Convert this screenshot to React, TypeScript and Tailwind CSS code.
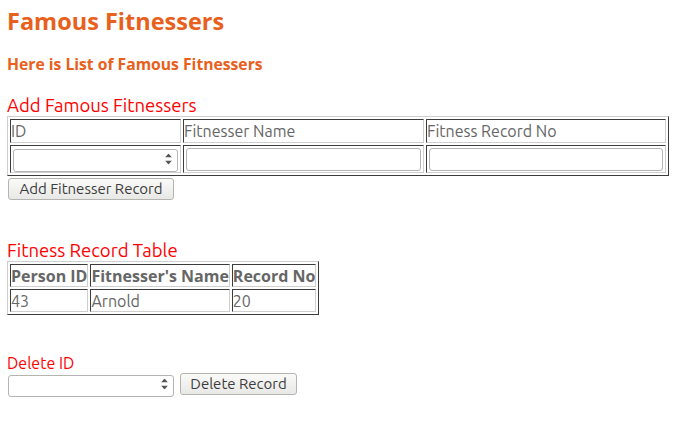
const body = "font-['Ubuntu','Noto_Sans','DejaVu_Sans',sans-serif]";

function Spinner() {
  return (
    <span className="pointer-events-none absolute right-[6px] top-1/2 flex -translate-y-1/2 flex-col items-center gap-[3px]">
      <svg width="7" height="4" viewBox="0 0 7 4">
        <path d="M0 4 L3.5 0 L7 4 Z" fill="#555" />
      </svg>
      <svg width="7" height="4" viewBox="0 0 7 4">
        <path d="M0 0 L3.5 4 L7 0 Z" fill="#555" />
      </svg>
    </span>
  );
}

function NumberBox({ className }: { className: string }) {
  return (
    <div className={`relative ${className}`}>
      <input
        type="text"
        className="h-full w-full rounded-[3px] border border-[#b4b4b0] bg-white px-1 text-[14px] outline-none"
      />
      <Spinner />
    </div>
  );
}

const cell = "border border-t-[#3c3c3c] border-l-[#3c3c3c] border-b-[#cfcfcf] border-r-[#cfcfcf] p-0";
const head = `${cell} whitespace-nowrap text-left font-['Open_Sans',sans-serif] text-[16px] font-bold`;

export default function App() {
  return (
    <div className={`min-h-[437px] bg-white px-[7px] pt-[7px] text-[#666666] ${body}`}>
      <h1 className="font-['Open_Sans',sans-serif] text-[23.5px] font-bold leading-[28px] text-[#e8601c]">
        Famous Fitnessers
      </h1>
      <h3 className="mt-[19px] font-['Open_Sans',sans-serif] text-[15.7px] font-bold leading-[21px] text-[#e8601c]">
        Here is List of Famous Fitnessers
      </h3>

      <h4 className="mt-[19px] text-[18.5px] leading-[22px] text-[#ff0000]">Add Famous Fitnessers</h4>
      <table className="border-separate border-spacing-[2px] border border-t-[#cfcfcf] border-l-[#cfcfcf] border-b-[#3c3c3c] border-r-[#3c3c3c]">
        <tbody>
          <tr className="h-[24px] text-[16px] leading-[20px]">
            <td className={`${cell} w-[171px]`}>ID</td>
            <td className={`${cell} w-[241px]`}>Fitnesser Name</td>
            <td className={`${cell} w-[240px]`}>Fitness Record No</td>
          </tr>
          <tr className="h-[28px]">
            <td className={`${cell} px-[2px]`}>
              <NumberBox className="h-[23px] w-full" />
            </td>
            <td className={`${cell} px-[2px]`}>
              <input
                type="text"
                className="h-[23px] w-full rounded-[3px] border border-[#b4b4b0] bg-white px-1 text-[14px] outline-none"
              />
            </td>
            <td className={`${cell} px-[2px]`}>
              <input
                type="text"
                className="h-[23px] w-full rounded-[3px] border border-[#b4b4b0] bg-white px-1 text-[14px] outline-none"
              />
            </td>
          </tr>
        </tbody>
      </table>
      <button className="mt-[2px] ml-[1px] h-[22px] w-[166px] rounded-[3px] border border-[#b4b4b0] bg-gradient-to-b from-[#fafaf9] to-[#e8e8e6] text-[15px] leading-[20px] text-[#3c3c3c]">
        Add Fitnesser Record
      </button>

      <h4 className="mt-[39px] text-[18.5px] leading-[22px] text-[#ff0000]">Fitness Record Table</h4>
      <table className="border-separate border-spacing-[2px] border border-t-[#cfcfcf] border-l-[#cfcfcf] border-b-[#3c3c3c] border-r-[#3c3c3c] text-[16px] leading-[20px]">
        <tbody>
          <tr className="h-[23px]">
            <th className={head}>Person ID</th>
            <th className={head}>Fitnesser's Name</th>
            <th className={head}>Record No</th>
          </tr>
          <tr className="h-[23px]">
            <td className={cell}>43</td>
            <td className={cell}>Arnold</td>
            <td className={cell}>20</td>
          </tr>
        </tbody>
      </table>

      <h4 className="mt-[39px] text-[16px] leading-[19px] text-[#ff0000]">Delete ID</h4>
      <div className="flex items-center gap-[6px] pl-[1px]">
        <NumberBox className="h-[22px] w-[166px]" />
        <button className="h-[22px] w-[117px] rounded-[3px] border border-[#b4b4b0] bg-gradient-to-b from-[#fafaf9] to-[#e8e8e6] text-[15px] leading-[20px] text-[#3c3c3c]">
          Delete Record
        </button>
      </div>
    </div>
  );
}
